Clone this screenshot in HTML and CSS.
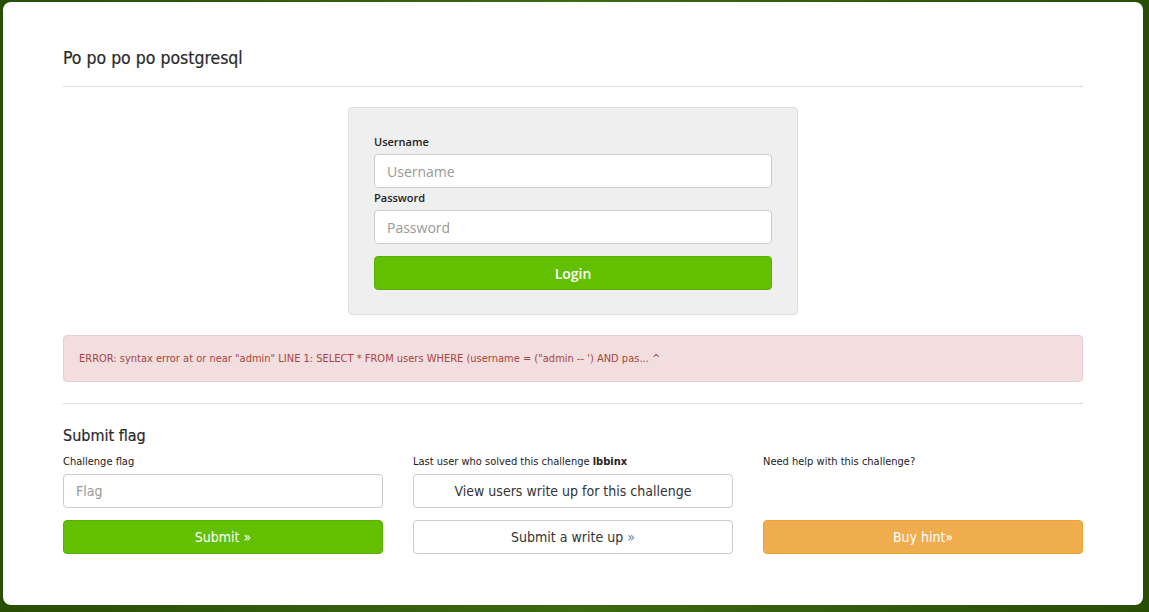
FILE: index.html
```html
<!DOCTYPE html>
<html>
<head>
  <title>Po po po po postgresql</title>
  <meta name="viewport" content="width=device-width, initial-scale=1.0">
  <link rel="stylesheet" href="styles.css">
</head>
<body>
  <div class="page">
    <h3 class="title">Po po po po postgresql</h3>
    <hr>

    <div class="login-well">
      <form class="login-form" onsubmit="return false;">
        <label for="username">Username</label>
        <input type="text" id="username" placeholder="Username">
        <label for="password">Password</label>
        <input type="password" id="password" placeholder="Password">
        <button class="btn btn-green btn-login" type="submit">Login</button>
      </form>
    </div>

    <div class="alert-error">ERROR: syntax error at or near "admin" LINE 1: SELECT * FROM users WHERE (username = ("admin -- ') AND pas... ^</div>

    <hr class="hr-low">

    <h4 class="subtitle">Submit flag</h4>
    <div class="flag-row">
      <div class="flag-col">
        <div class="small-label">Challenge flag</div>
        <input type="text" class="flag-input" placeholder="Flag">
        <button class="btn btn-green">Submit &raquo;</button>
      </div>
      <div class="flag-col">
        <div class="small-label">Last user who solved this challenge <b>lbbinx</b></div>
        <button class="btn btn-white">View users write up for this challenge</button>
        <button class="btn btn-white">Submit a write up <span class="raquo">&raquo;</span></button>
      </div>
      <div class="flag-col">
        <div class="small-label">Need help with this challenge?</div>
        <div class="spacer"></div>
        <button class="btn btn-orange">Buy hint&raquo;</button>
      </div>
    </div>
  </div>
</body>
</html>
```

FILE: styles.css
```css
html {
  height: 100%;
}

body {
  margin: 0;
  padding: 2px 6px 7px 3px;
  min-height: 100%;
  box-sizing: border-box;
  background: #2f5808;
  background-image: linear-gradient(90deg, #284d05, #3d6912 50%, #284d05);
  font-family: "DejaVu Sans Condensed", "DejaVu Sans", sans-serif;
  color: #333;
}

.page {
  background: #fff;
  border-radius: 8px;
  height: 603px;
  box-sizing: border-box;
  padding: 38px 60px 0 60px;
}

.title {
  margin: 0;
  font-size: 17.5px;
  font-weight: normal;
  line-height: 36px;
  color: #2a2a2a;
  -webkit-text-stroke: 0.2px #2a2a2a;
}

hr {
  border: 0;
  border-top: 1px solid #ddd;
  margin: 10px 0 20px 0;
}

.login-well {
  width: 450px;
  margin: 0 auto;
  box-sizing: border-box;
  background: #efefef;
  border: 1px solid #e0e0e0;
  border-radius: 4px;
  padding: 26px 25px 24px 25px;
}

.login-form {
  display: flex;
  flex-direction: column;
}

.login-form label {
  font-family: "Open Sans", sans-serif;
  font-size: 11px;
  font-weight: 600;
  color: #222;
  line-height: 15px;
  margin-bottom: 5px;
}

.login-form input {
  height: 34px;
  box-sizing: border-box;
  border: 1px solid #ccc;
  border-radius: 4px;
  padding: 0 12px;
  font-family: "Open Sans", sans-serif;
  font-size: 14px;
  margin-bottom: 2px;
}

.login-form input::placeholder {
  color: #999;
}

.login-form .btn-login {
  margin-top: 10px;
  font-family: "Open Sans", sans-serif;
  font-weight: 600;
  font-size: 14px;
}

.btn {
  display: block;
  width: 100%;
  height: 34px;
  box-sizing: border-box;
  border-radius: 4px;
  font-family: "DejaVu Sans Condensed", "DejaVu Sans", sans-serif;
  font-size: 14px;
  cursor: pointer;
}

.btn-green {
  background: #62c000;
  border: 1px solid #5aae06;
  color: #fff;
}

.btn-white {
  background: #fff;
  border: 1px solid #ccc;
  color: #333;
}

.btn-white .raquo {
  color: #5a86b8;
}

.btn-orange {
  background: #f0ad4e;
  border: 1px solid #eea236;
  color: #fff;
}

.alert-error {
  margin-top: 20px;
  background: #f2dede;
  border: 1px solid #ebccd1;
  border-radius: 4px;
  color: #a94442;
  font-size: 11px;
  padding: 15px 15px;
  line-height: 15px;
}

.hr-low {
  margin: 21px 0 20px 0;
}

.subtitle {
  margin: 0;
  font-size: 16px;
  font-weight: normal;
  line-height: 24px;
  color: #2a2a2a;
  -webkit-text-stroke: 0.2px #2a2a2a;
}

.flag-row {
  display: grid;
  grid-template-columns: repeat(3, 1fr);
  column-gap: 30px;
  margin-top: 6px;
}

.flag-col {
  display: flex;
  flex-direction: column;
}

.small-label {
  font-size: 11px;
  color: #222;
  line-height: 15px;
  margin-bottom: 5px;
}

.flag-input {
  height: 34px;
  box-sizing: border-box;
  border: 1px solid #ccc;
  border-radius: 4px;
  padding: 0 12px;
  font-family: "DejaVu Sans Condensed", "DejaVu Sans", sans-serif;
  font-size: 14px;
}

.flag-input::placeholder {
  color: #999;
}

.flag-col .btn + .btn,
.flag-input + .btn {
  margin-top: 12px;
}

.spacer {
  height: 46px;
}
```
